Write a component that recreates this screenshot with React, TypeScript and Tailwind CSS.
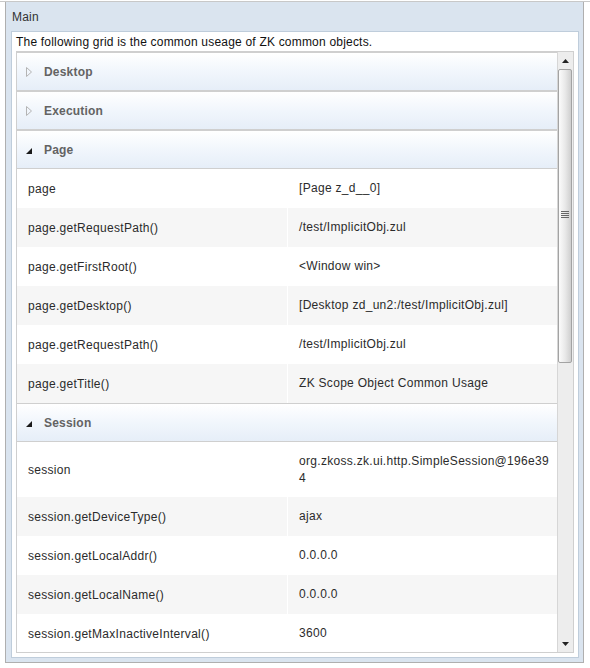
import React from 'react'

type Row = { label: string; value: string; tall?: boolean }
type Group = { title: string; open: boolean; rows: Row[] }

const groups: Group[] = [
    { title: 'Desktop', open: false, rows: [] },
    { title: 'Execution', open: false, rows: [] },
    {
        title: 'Page',
        open: true,
        rows: [
            { label: 'page', value: '[Page z_d__0]' },
            { label: 'page.getRequestPath()', value: '/test/ImplicitObj.zul' },
            { label: 'page.getFirstRoot()', value: '<Window win>' },
            { label: 'page.getDesktop()', value: '[Desktop zd_un2:/test/ImplicitObj.zul]' },
            { label: 'page.getRequestPath()', value: '/test/ImplicitObj.zul' },
            { label: 'page.getTitle()', value: 'ZK Scope Object Common Usage' },
        ],
    },
    {
        title: 'Session',
        open: true,
        rows: [
            { label: 'session', value: 'org.zkoss.zk.ui.http.SimpleSession@196e394', tall: true },
            { label: 'session.getDeviceType()', value: 'ajax' },
            { label: 'session.getLocalAddr()', value: '0.0.0.0' },
            { label: 'session.getLocalName()', value: '0.0.0.0' },
            { label: 'session.getMaxInactiveInterval()', value: '3600' },
        ],
    },
]

function Arrow({ open }: { open: boolean }) {
    if (open) {
        return (
            <svg width="6" height="6" viewBox="0 0 6 6" className="mt-[2px]">
                <polygon points="6,0 6,6 0,6" fill="#1a1a1a" />
            </svg>
        )
    }
    return (
        <svg width="6" height="10" viewBox="0 0 6 10">
            <polygon points="0.5,0.5 5.5,5 0.5,9.5" fill="none" stroke="#b4b4b4" strokeWidth="1" />
        </svg>
    )
}

function GroupHeader({ g }: { g: Group }) {
    return (
        <div className="h-[39px] shrink-0 flex items-center border-y border-[#cfcfcf] bg-linear-to-b from-white via-[#f1f6fc] to-[#e6eef8]">
            <div className="w-[27px] flex justify-end pr-[12px]">
                <Arrow open={g.open} />
            </div>
            <span className="font-bold text-[#636363] tracking-[0.2px]">{g.title}</span>
        </div>
    )
}

function Scrollbar() {
    return (
        <div className="w-[16px] shrink-0 flex flex-col bg-[#ededed] border-l border-[#d6d6d6]">
            <div className="h-[17px] flex items-center justify-center">
                <svg width="7" height="4" viewBox="0 0 7 4">
                    <polygon points="3.5,0 7,4 0,4" fill="#222" />
                </svg>
            </div>
            <div className="h-[294px] mr-px rounded-[2px] border border-[#a3a3a3] bg-linear-to-r from-[#fbfbfb] via-[#e9e9e9] to-[#cfcfcf] flex items-center justify-center">
                <div className="flex flex-col gap-[1px] mb-[3px]">
                    <div className="w-[8px] h-px bg-[#666]" />
                    <div className="w-[8px] h-px bg-[#666]" />
                    <div className="w-[8px] h-px bg-[#666]" />
                    <div className="w-[8px] h-px bg-[#666]" />
                </div>
            </div>
            <div className="flex-1" />
            <div className="h-[17px] flex items-center justify-center">
                <svg width="7" height="4" viewBox="0 0 7 4">
                    <polygon points="0,0 7,0 3.5,4" fill="#222" />
                </svg>
            </div>
        </div>
    )
}

export default function App() {
    return (
        <div className="w-[590px] h-[668px] bg-white overflow-hidden text-[12px] font-['Liberation_Sans',Arial,sans-serif]">
            <div className="h-px mt-px bg-[#c8c8c8]" />
            <div className="ml-[5px] w-[579px] h-[661px] bg-[#dae4ef] border-x border-b border-[#afafaf] flex flex-col">
                <div className="h-[29px] shrink-0 flex items-center pl-[6px] text-[#333] tracking-[0.2px]">Main</div>
                <div className="ml-[5px] mr-[4px] mb-[4px] flex-1 min-h-0 bg-white border border-[#bfcddb] flex flex-col">
                    <div className="h-[19px] shrink-0 flex items-center pl-[4px] text-[#111] tracking-[0.2px]">
                        The following grid is the common useage of ZK common objects.
                    </div>
                    <div className="mx-[4px] mb-[4px] flex-1 min-h-0 border border-[#cfcfcf] flex">
                        <div className="flex-1 overflow-hidden flex flex-col">
                            {groups.map((g) => (
                                <React.Fragment key={g.title}>
                                    <GroupHeader g={g} />
                                    {g.rows.map((r, i) => (
                                        <div
                                            key={i}
                                            className={`shrink-0 flex text-[#2b2b2b] tracking-[0.3px] ${r.tall ? 'h-[55px]' : 'h-[39px]'} ${i % 2 === 1 ? 'bg-[#f6f6f6]' : 'bg-white'}`}
                                        >
                                            <div className="w-[270px] flex items-center pl-[11px]">{r.label}</div>
                                            <div className="w-[270px] flex items-center pl-[11px] pr-[8px] border-l border-white leading-[17px] break-all">
                                                <span className="min-w-0">{r.value}</span>
                                            </div>
                                        </div>
                                    ))}
                                </React.Fragment>
                            ))}
                        </div>
                        <Scrollbar />
                    </div>
                </div>
            </div>
        </div>
    )
}
